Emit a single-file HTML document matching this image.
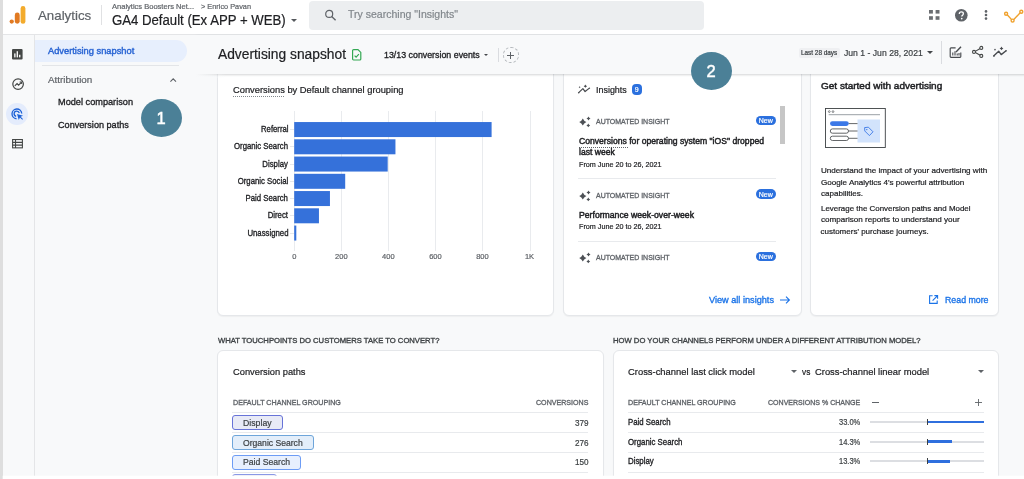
<!DOCTYPE html>
<html><head><meta charset="utf-8"><title>Advertising snapshot</title>
<style>
*{box-sizing:border-box;margin:0;padding:0}
html,body{width:1024px;height:479px;overflow:hidden;background:#f8f9fa;font-family:"Liberation Sans",sans-serif;color:#202124}
.a{position:absolute}
.card{position:absolute;background:#fff;border:1px solid #e5e7ea;border-radius:6px;box-shadow:0 1px 1px rgba(60,64,67,.05)}
.t{position:absolute;white-space:pre;line-height:1;-webkit-text-stroke:0.2px currentColor}
.hl{position:absolute;height:1px;background:#e8eaed}
.bar{position:absolute;left:294px;height:15.2px;background:#3470db}
.gl{position:absolute;top:111px;width:1px;height:140px;background:#e9ebee}
.tk{position:absolute;left:290px;width:4px;height:1px;background:#e6e8eb}
.chip{position:absolute;left:232.2px;height:14.6px;border:1px solid #6d9cf5;border-radius:3px;background:#e8f0fe}
.pill{position:absolute;left:755.7px;width:20px;height:9.8px;border-radius:5px;background:#2b70de}
svg{position:absolute;overflow:visible}
</style></head><body>
<div class="a" style="left:0;top:0;width:1024px;height:35px;background:#fff;border-bottom:1px solid #e4e5e7"></div>
<div class="a" style="left:0;top:35px;width:35px;height:444px;border-right:1px solid #e4e5e7"></div>
<div class="a" style="left:0;top:0;width:2.6px;height:479px;background:#dedede"></div>

<!-- logo -->
<svg style="left:0;top:0" width="40" height="34" viewBox="0 0 40 34">
<circle cx="11.7" cy="21.6" r="2.15" fill="#e17a22"/>
<rect x="14.8" y="12.5" width="4.9" height="11.3" rx="2.45" fill="#e17a22"/>
<rect x="20.6" y="6" width="4.8" height="17.8" rx="2.4" fill="#f3ab2c"/>
</svg>
<div class="a" style="left:101px;top:5px;width:1px;height:19.5px;background:#e0e1e3"></div>
<div class="a" style="left:290.7px;top:18.8px;border:3px solid transparent;border-top:3.3px solid #55585c;border-bottom:0"></div>
<div class="a" style="left:308.5px;top:0.5px;width:395.3px;height:29px;background:#eceef0;border-radius:4px"></div>
<svg style="left:324px;top:9px" width="14" height="14" viewBox="0 0 14 14"><circle cx="5.2" cy="4.9" r="3.5" fill="none" stroke="#5f6368" stroke-width="1.2"/><path d="M7.7 7.5 L11.6 11.2" stroke="#5f6368" stroke-width="1.4"/></svg>
<!-- header right icons -->
<svg style="left:929.1px;top:10px" width="10.6" height="9.8" viewBox="0 0 10.6 9.8" fill="#6b6e72"><rect x="0" y="0" width="3.9" height="3.6"/><rect x="6.6" y="0" width="3.9" height="3.6"/><rect x="0" y="6.2" width="3.9" height="3.6"/><rect x="6.6" y="6.2" width="3.9" height="3.6"/></svg>
<svg style="left:955px;top:8.7px" width="12.6" height="12.6" viewBox="0 0 24 24"><circle cx="12" cy="12" r="12" fill="#5f6368"/><path d="M8.2 9.4c0-2.2 1.7-3.8 3.9-3.8s3.8 1.4 3.8 3.4c0 2.6-3 2.9-3 5.2" fill="none" stroke="#fff" stroke-width="2.4"/><circle cx="12.8" cy="18.2" r="1.6" fill="#fff"/></svg>
<svg style="left:984.2px;top:10px" width="4" height="10" viewBox="0 0 4 10" fill="#5f6368"><circle cx="2" cy="1.4" r="1.3"/><circle cx="2" cy="5" r="1.3"/><circle cx="2" cy="8.6" r="1.3"/></svg>
<svg style="left:1000px;top:8px" width="24" height="16" viewBox="0 0 24 16" fill="none" stroke="#f0a22e" stroke-width="1.4"><path d="M7.2 6.8 L11.6 11.6 M13.8 11.4 L20.2 4.8"/><circle cx="6.1" cy="5.7" r="1.5"/><circle cx="12.6" cy="12.6" r="1.5"/><circle cx="21.3" cy="3.7" r="1.5"/></svg>

<!-- rail icons -->
<svg style="left:12px;top:49px" width="10.6" height="10.6" viewBox="0 0 24 24"><rect width="24" height="24" rx="2.5" fill="#444746"/><rect x="5" y="10" width="3" height="9" fill="#fff"/><rect x="10.5" y="5" width="3" height="14" fill="#fff"/><rect x="16" y="13" width="3" height="6" fill="#fff"/></svg>
<svg style="left:11.7px;top:78px" width="12.2" height="12.2" viewBox="0 0 24 24" fill="none" stroke="#444746" stroke-width="2.4"><circle cx="12" cy="12" r="10.4"/><path d="M5.5 15.5 L10 11 L13 14 L18.5 8.5"/><path d="M15 8 h4 v4" stroke-width="2"/></svg>
<div class="a" style="left:6.3px;top:102.6px;width:22px;height:22.4px;border-radius:50%;background:#e4ecfc"></div>
<svg style="left:11.2px;top:108px" width="12.6" height="12.6" viewBox="0 0 24 24" fill="none" stroke="#1a60d6" stroke-width="2.5"><path d="M20.5 10.5 A9.3 9.3 0 1 0 10.5 20.5"/><path d="M15.8 9.8 A5 5 0 1 0 9.8 15.8"/><path d="M11.5 11.5 L14.8 23 L17 18.2 L21.5 22.5 L22.8 21.2 L18.4 16.8 L23 14.8 Z" fill="#1a60d6" stroke="none"/></svg>
<svg style="left:12px;top:138.8px" width="11" height="9.4" viewBox="0 0 22 19" fill="none" stroke="#444746" stroke-width="2.2"><rect x="1.1" y="1.1" width="19.8" height="16.8"/><path d="M1 6.8 H21 M1 12.4 H21 M7 1 V18"/></svg>

<!-- nav -->
<div class="a" style="left:35px;top:40px;width:151.8px;height:21.7px;background:#e7effd;border-radius:0 11px 11px 0"></div>
<div class="hl" style="left:42px;top:65px;width:137px;background:#e3e5e8"></div>
<svg style="left:170.3px;top:77.6px" width="6.4" height="4" viewBox="0 0 6.4 4" fill="none" stroke="#5f6368" stroke-width="1.1"><path d="M0.4 3.6 L3.2 0.8 L6 3.6"/></svg>

<!-- cards -->
<div class="card" style="left:217.3px;top:60px;width:337px;height:256px"></div>
<div class="card" style="left:563px;top:60px;width:239px;height:256px"></div>
<div class="card" style="left:810px;top:60px;width:189px;height:256px"></div>
<div class="card" style="left:217.3px;top:350px;width:386.7px;height:150px"></div>
<div class="card" style="left:612.8px;top:350px;width:386.4px;height:150px"></div>
<!-- topbar -->
<div class="a" style="left:196px;top:35px;width:840px;height:38.6px;background:#f8f9fa;box-shadow:0 1px 2px rgba(60,64,67,.22)"></div>
<div class="a" style="left:35px;top:35px;width:180px;height:4px;background:#f8f9fa"></div>
<div class="a" style="left:186.5px;top:35px;width:12px;height:38.6px;background:#f8f9fa"></div>
<div class="a" style="left:186px;top:73.6px;width:40px;height:4px;background:linear-gradient(to right,#f8f9fa 25%,rgba(248,249,250,0))"></div>

<!-- topbar items -->
<svg style="left:352.2px;top:49.2px" width="9.4" height="11.6" viewBox="0 0 9.4 11.6" fill="none" stroke="#34a853" stroke-width="1.2"><path d="M0.6 1.6 a1 1 0 0 1 1 -1 H6 L8.8 3.4 V10 a1 1 0 0 1 -1 1 H1.6 a1 1 0 0 1 -1 -1 Z"/><path d="M2.6 6.6 L4.1 8.1 L6.9 5.2"/></svg>
<div class="a" style="left:484.1px;top:53.8px;border:2.7px solid transparent;border-top:2.8px solid #44474a;border-bottom:0"></div>
<div class="a" style="left:498px;top:48px;width:1px;height:14px;background:#dadce0"></div>
<div class="a" style="left:503.2px;top:47.4px;width:15.4px;height:15.4px;border:1px dashed #b4b8bc;border-radius:50%"></div>
<svg style="left:507.4px;top:51.6px" width="7" height="7" viewBox="0 0 7 7" stroke="#5f6368" stroke-width="1"><path d="M0 3.5 H7 M3.5 0 V7"/></svg>
<div class="a" style="left:798.5px;top:48px;width:41.5px;height:9.6px;background:#eff0f2;border-radius:2px"></div>
<div class="a" style="left:927.4px;top:50.5px;border:3.2px solid transparent;border-top:3.1px solid #44474a;border-bottom:0"></div>
<div class="a" style="left:941px;top:40.6px;width:1px;height:23px;background:#dadce0"></div>
<svg style="left:948.5px;top:45.5px" width="13" height="12.6" viewBox="0 0 13 12.6" fill="none" stroke="#474a4e" stroke-width="1.15"><path d="M6.6 1.9 H2 a0.8 0.8 0 0 0 -0.8 0.8 V10.6 a0.8 0.8 0 0 0 0.8 0.8 H11 a0.8 0.8 0 0 0 0.8 -0.8 V6.4"/><path d="M3.8 9.6 V6.6 M6 9.6 V5.2 M8.2 9.6 V7.6 M10 9.6 V7" stroke-width="1.1"/><path d="M7 6 L12 0.8" stroke-width="1.4"/></svg>
<svg style="left:971.7px;top:46.2px" width="11.4" height="11.8" viewBox="0 0 11.4 11.8" fill="none" stroke="#444746" stroke-width="1.1"><path d="M8.6 2.2 L2.4 5.9 L8.6 9.6"/><circle cx="9.3" cy="1.9" r="1.5" fill="#f8f9fa"/><circle cx="2" cy="5.9" r="1.5" fill="#f8f9fa"/><circle cx="9.3" cy="9.9" r="1.5" fill="#f8f9fa"/></svg>
<svg style="left:992px;top:46px" width="16.0" height="12.0" viewBox="0 0 16 12" fill="none" stroke="#474a4e" stroke-width="1.35" stroke-linejoin="round"><path d="M1.9 9.8 L6.7 5.2 L9.2 8.6 L14.1 4.7"/><circle cx="1.9" cy="9.9" r="0.9" fill="#474a4e" stroke="none"/><circle cx="14.1" cy="4.7" r="0.8" fill="#474a4e" stroke="none"/><path d="M9.5 0.5 Q9.97 1.92 11.4 2.4 Q9.97 2.88 9.5 4.3 Q9.03 2.88 7.6 2.4 Q9.03 1.92 9.5 0.5Z" fill="#474a4e" stroke="none"/><path d="M3 2.6 Q3.27 3.43 4.1 3.7 Q3.27 3.98 3 4.800000000000001 Q2.73 3.98 1.9 3.7 Q2.73 3.43 3 2.6Z" fill="#474a4e" stroke="none"/></svg>

<!-- card1 chart -->
<div class="a" style="left:232.5px;top:95.5px;width:51px;height:0;border-top:1px dotted #80868b"></div>
<div class="gl" style="left:294px"></div><div class="gl" style="left:341px"></div><div class="gl" style="left:388px"></div><div class="gl" style="left:435px"></div><div class="gl" style="left:482px"></div><div class="gl" style="left:529.5px"></div>
<svg style="left:0;top:0" width="1024" height="479" viewBox="0 0 1024 479" fill="#3571da"><rect x="294.2" y="122.05" width="197.4" height="15"/><rect x="294.2" y="139.30" width="101.25" height="15"/><rect x="294.2" y="156.55" width="93.5" height="15"/><rect x="294.2" y="173.80" width="51" height="15"/><rect x="294.2" y="191.05" width="35.75" height="15"/><rect x="294.2" y="208.30" width="24.75" height="15"/><rect x="294.2" y="225.55" width="2.1" height="15"/></svg>
<div class="tk" style="top:129px"></div><div class="tk" style="top:146.3px"></div><div class="tk" style="top:163.5px"></div><div class="tk" style="top:180.8px"></div><div class="tk" style="top:198px"></div><div class="tk" style="top:215.3px"></div><div class="tk" style="top:232.5px"></div>

<!-- card2 insights -->
<svg style="left:577.3px;top:84.3px" width="14.1" height="10.6" viewBox="0 0 16 12" fill="none" stroke="#474a4e" stroke-width="1.35" stroke-linejoin="round"><path d="M1.9 9.8 L6.7 5.2 L9.2 8.6 L14.1 4.7"/><circle cx="1.9" cy="9.9" r="0.9" fill="#474a4e" stroke="none"/><circle cx="14.1" cy="4.7" r="0.8" fill="#474a4e" stroke="none"/><path d="M9.5 0.5 Q9.97 1.92 11.4 2.4 Q9.97 2.88 9.5 4.3 Q9.03 2.88 7.6 2.4 Q9.03 1.92 9.5 0.5Z" fill="#474a4e" stroke="none"/><path d="M3 2.6 Q3.27 3.43 4.1 3.7 Q3.27 3.98 3 4.800000000000001 Q2.73 3.98 1.9 3.7 Q2.73 3.43 3 2.6Z" fill="#474a4e" stroke="none"/></svg>
<div class="a" style="left:632px;top:84.3px;width:9.5px;height:10.9px;background:#2b70de;border-radius:4px"></div>
<div class="a" style="left:779.6px;top:106.2px;width:5.8px;height:38px;background:#c6c6c6"></div>
<svg style="left:579px;top:116px" width="12" height="12" viewBox="0 0 12 12" fill="#4d5156"><path d="M3.8 2.4 Q4.88 4.92 7.4 6 Q4.88 7.08 3.8 9.6 Q2.72 7.08 0.19999999999999973 6 Q2.72 4.92 3.8 2.4Z"/><path d="M9.5 0.3999999999999999 Q10.10 1.80 11.5 2.4 Q10.10 3.00 9.5 4.4 Q8.90 3.00 7.5 2.4 Q8.90 1.80 9.5 0.3999999999999999Z"/><path d="M9.3 7.5 Q9.87 8.83 11.200000000000001 9.4 Q9.87 9.97 9.3 11.3 Q8.73 9.97 7.4 9.4 Q8.73 8.83 9.3 7.5Z"/></svg>
<svg style="left:579px;top:189.5px" width="12" height="12" viewBox="0 0 12 12" fill="#4d5156"><path d="M3.8 2.4 Q4.88 4.92 7.4 6 Q4.88 7.08 3.8 9.6 Q2.72 7.08 0.19999999999999973 6 Q2.72 4.92 3.8 2.4Z"/><path d="M9.5 0.3999999999999999 Q10.10 1.80 11.5 2.4 Q10.10 3.00 9.5 4.4 Q8.90 3.00 7.5 2.4 Q8.90 1.80 9.5 0.3999999999999999Z"/><path d="M9.3 7.5 Q9.87 8.83 11.200000000000001 9.4 Q9.87 9.97 9.3 11.3 Q8.73 9.97 7.4 9.4 Q8.73 8.83 9.3 7.5Z"/></svg>
<svg style="left:579px;top:252px" width="12" height="12" viewBox="0 0 12 12" fill="#4d5156"><path d="M3.8 2.4 Q4.88 4.92 7.4 6 Q4.88 7.08 3.8 9.6 Q2.72 7.08 0.19999999999999973 6 Q2.72 4.92 3.8 2.4Z"/><path d="M9.5 0.3999999999999999 Q10.10 1.80 11.5 2.4 Q10.10 3.00 9.5 4.4 Q8.90 3.00 7.5 2.4 Q8.90 1.80 9.5 0.3999999999999999Z"/><path d="M9.3 7.5 Q9.87 8.83 11.200000000000001 9.4 Q9.87 9.97 9.3 11.3 Q8.73 9.97 7.4 9.4 Q8.73 8.83 9.3 7.5Z"/></svg>
<div class="pill" style="top:115.7px"></div><div class="pill" style="top:189.2px"></div><div class="pill" style="top:251.7px"></div>
<div class="a" style="left:578.7px;top:147.2px;width:49.3px;height:0;border-top:1px dotted #5f6368"></div>
<div class="hl" style="left:578px;top:178.3px;width:197.5px"></div>
<div class="hl" style="left:578px;top:240.8px;width:197.5px"></div>
<svg style="left:779.5px;top:295.5px" width="10" height="8" viewBox="0 0 10 8" fill="none" stroke="#1a73e8" stroke-width="1.1"><path d="M0 4 H9.4 M6 0.6 L9.4 4 L6 7.4"/></svg>

<!-- card3 -->
<svg style="left:825px;top:108px" width="61" height="40" viewBox="0 0 61 40" fill="none">
<rect x="0.5" y="0.5" width="59.8" height="39" stroke="#3c4043" stroke-width="0.9"/>
<circle cx="4.3" cy="3.6" r="0.9" stroke="#3c4043" stroke-width="0.6"/><circle cx="8" cy="3.6" r="0.9" stroke="#3c4043" stroke-width="0.6"/>
<path d="M3.7 6.7 H55" stroke="#9aa0a6" stroke-width="1"/>
<rect x="32.5" y="11.5" width="22.5" height="23" fill="#d2e3fc"/>
<rect x="5" y="13.2" width="18.8" height="4.8" rx="2.4" fill="#3b78e7"/>
<rect x="5.3" y="20.9" width="18.2" height="4.3" rx="2.15" stroke="#3c4043" stroke-width="0.8"/>
<rect x="5.3" y="28.2" width="18.2" height="4.3" rx="2.15" stroke="#3c4043" stroke-width="0.8"/>
<path d="M23.8 15.6 H32.5 M23.5 23 H32.5 M23.5 30.3 H32.5" stroke="#3c4043" stroke-width="0.8"/>
<path d="M39.6 19.6 L43.4 19.2 L48 23.8 L44.4 27.6 L39.8 23 Z" stroke="#3b78e7" stroke-width="0.9" stroke-linejoin="round"/><circle cx="41.8" cy="21.6" r="0.7" fill="#3b78e7"/>
</svg>
<svg style="left:929.2px;top:295.4px" width="9.2" height="9" viewBox="0 0 9.2 9" fill="none" stroke="#1a73e8" stroke-width="1.1"><path d="M3.6 0.8 H0.6 V8.4 H8.2 V5.4"/><path d="M5.4 0.6 H8.6 V3.8 M8.4 0.8 L3.6 5.6"/></svg>

<!-- card4 -->
<div class="hl" style="left:232.2px;top:412.2px;width:356px"></div>
<div class="hl" style="left:232.2px;top:431.9px;width:356px"></div>
<div class="hl" style="left:232.2px;top:451.8px;width:356px"></div>
<div class="hl" style="left:232.2px;top:471.7px;width:356px"></div>
<div class="chip" style="top:415.2px;width:50.5px;border-color:#6773d8;background:#e8eaf6"></div>
<div class="chip" style="top:435.1px;width:81.6px;border-color:#6ea5da;background:#e3eefa"></div>
<div class="chip" style="top:454.7px;width:68.5px;height:15px"></div>
<div class="chip" style="top:474.3px;width:44.6px;border-color:#8a98e6;background:#e8eaf6"></div>

<!-- card5 -->
<div class="a" style="left:791.2px;top:370.2px;border:3px solid transparent;border-top:3px solid #5f6368;border-bottom:0"></div>
<div class="a" style="left:977.9px;top:370.2px;border:3.1px solid transparent;border-top:3px solid #5f6368;border-bottom:0"></div>
<div class="a" style="left:871.6px;top:401.5px;width:7px;height:1px;background:#5f6368"></div>
<svg style="left:975.2px;top:398.5px" width="7" height="7" viewBox="0 0 7 7" stroke="#5f6368" stroke-width="0.9"><path d="M0 3.5 H7 M3.5 0 V7"/></svg>
<div class="hl" style="left:628.2px;top:411.8px;width:355.6px"></div>
<div class="hl" style="left:628.2px;top:431.7px;width:355.6px"></div>
<div class="hl" style="left:628.2px;top:451.6px;width:355.6px"></div>
<div class="hl" style="left:628.2px;top:471.5px;width:355.6px"></div>
<div class="a" style="left:870.3px;top:420.8px;width:113.7px;height:2.3px;background:#dcdee2"></div>
<div class="a" style="left:870.3px;top:440.5px;width:113.7px;height:2.3px;background:#dcdee2"></div>
<div class="a" style="left:870.3px;top:460.2px;width:113.7px;height:2.3px;background:#dcdee2"></div>
<div class="a" style="left:927.4px;top:420.6px;width:56.4px;height:2.7px;background:#2f6fde"></div>
<div class="a" style="left:927.4px;top:440.3px;width:24.5px;height:2.7px;background:#2f6fde"></div>
<div class="a" style="left:927.4px;top:460px;width:22.6px;height:2.7px;background:#2f6fde"></div>
<div class="a" style="left:927px;top:419px;width:1px;height:6.2px;background:#3c4043"></div>
<div class="a" style="left:927px;top:438.6px;width:1px;height:6.2px;background:#3c4043"></div>
<div class="a" style="left:927px;top:458.2px;width:1px;height:6.2px;background:#3c4043"></div>

<svg style="left:0;top:470px" width="1024" height="9" viewBox="0 0 1024 9"><rect x="2.7" y="5.7" width="1022" height="4" fill="#fff"/></svg>
<!-- annotation circles -->
<div class="a" style="left:140.6px;top:99px;width:41px;height:38px;border-radius:50%;background:#4b8097"></div>
<div class="a" style="left:690.5px;top:51.5px;width:41.2px;height:38px;border-radius:50%;background:#4b8097"></div>

<div class="a" style="left:0;top:0;width:1024px;height:479px;will-change:transform">
<div class="t" style="top:8.90px;font-size:13.5px;color:#5f6368;left:38.00px;transform:scaleX(0.9846);transform-origin:0 0;">Analytics</div>
<div class="t" style="top:3.00px;font-size:7.5px;color:#5f6368;left:111.80px;transform:scaleX(1.0036);transform-origin:0 0;">Analytics Boosters Net...</div>
<div class="t" style="top:3.00px;font-size:7.5px;color:#5f6368;left:201.30px;transform:scaleX(0.9789);transform-origin:0 0;">&gt; Enrico Pavan</div>
<div class="t" style="top:12.50px;font-size:14px;color:#202124;left:111.80px;transform:scaleX(0.9412);transform-origin:0 0;">GA4 Default (Ex APP + WEB)</div>
<div class="t" style="top:9.25px;font-size:10.5px;color:#80868b;left:348.00px;transform:scaleX(1.0020);transform-origin:0 0;">Try searching "Insights"</div>
<div class="t" style="top:46.25px;font-size:9.5px;color:#2b66d4;left:47.50px;transform:scaleX(0.9779);transform-origin:0 0;-webkit-text-stroke:0.45px currentColor;">Advertising snapshot</div>
<div class="t" style="top:75.00px;font-size:9.5px;color:#5f6368;left:47.50px;transform:scaleX(1.0343);transform-origin:0 0;">Attribution</div>
<div class="t" style="top:97.00px;font-size:9.5px;color:#202124;left:57.50px;transform:scaleX(0.9662);transform-origin:0 0;-webkit-text-stroke:0.32px currentColor;">Model comparison</div>
<div class="t" style="top:119.60px;font-size:9.5px;color:#202124;left:57.50px;transform:scaleX(0.9576);transform-origin:0 0;-webkit-text-stroke:0.32px currentColor;">Conversion paths</div>
<div class="t" style="top:46.75px;font-size:14px;color:#202124;left:218.00px;transform:scaleX(0.9849);transform-origin:0 0;">Advertising snapshot</div>
<div class="t" style="top:51.25px;font-size:9px;color:#202124;left:384.00px;transform:scaleX(0.9813);transform-origin:0 0;-webkit-text-stroke:0.32px currentColor;">13/13 conversion events</div>
<div class="t" style="top:49.75px;font-size:6.3px;color:#3c4043;left:801.00px;transform:scaleX(1.0149);transform-origin:0 0;">Last 28 days</div>
<div class="t" style="top:48.50px;font-size:9px;color:#3c4043;left:844.25px;transform:scaleX(0.9596);transform-origin:0 0;">Jun 1 - Jun 28, 2021</div>
<div class="t" style="top:85.50px;font-size:9px;color:#202124;left:232.50px;transform:scaleX(1.0358);transform-origin:0 0;">Conversions by Default channel grouping</div>
<div class="t" style="top:125.10px;font-size:8.8px;color:#202124;left:260.75px;transform:scaleX(0.8787);transform-origin:0 0;-webkit-text-stroke:0.32px currentColor;">Referral</div>
<div class="t" style="top:142.37px;font-size:8.8px;color:#202124;left:234.25px;transform:scaleX(0.8834);transform-origin:0 0;-webkit-text-stroke:0.32px currentColor;">Organic Search</div>
<div class="t" style="top:159.64px;font-size:8.8px;color:#202124;right:735.75px;transform:scaleX(0.8834);transform-origin:100% 0;-webkit-text-stroke:0.32px currentColor;">Display</div>
<div class="t" style="top:176.91px;font-size:8.8px;color:#202124;right:735.75px;transform:scaleX(0.8834);transform-origin:100% 0;-webkit-text-stroke:0.32px currentColor;">Organic Social</div>
<div class="t" style="top:194.18px;font-size:8.8px;color:#202124;right:735.75px;transform:scaleX(0.8834);transform-origin:100% 0;-webkit-text-stroke:0.32px currentColor;">Paid Search</div>
<div class="t" style="top:211.45px;font-size:8.8px;color:#202124;right:735.75px;transform:scaleX(0.8834);transform-origin:100% 0;-webkit-text-stroke:0.32px currentColor;">Direct</div>
<div class="t" style="top:228.72px;font-size:8.8px;color:#202124;right:735.75px;transform:scaleX(0.8834);transform-origin:100% 0;-webkit-text-stroke:0.32px currentColor;">Unassigned</div>
<div class="t" style="top:253.25px;font-size:7.5px;color:#5f6368;left:294.25px;transform:translateX(-50%) scaleX(1.0000);">0</div>
<div class="t" style="top:253.25px;font-size:7.5px;color:#5f6368;left:341.30px;transform:translateX(-50%) scaleX(1.0000);">200</div>
<div class="t" style="top:253.25px;font-size:7.5px;color:#5f6368;left:388.35px;transform:translateX(-50%) scaleX(1.0000);">400</div>
<div class="t" style="top:253.25px;font-size:7.5px;color:#5f6368;left:435.40px;transform:translateX(-50%) scaleX(1.0000);">600</div>
<div class="t" style="top:253.25px;font-size:7.5px;color:#5f6368;left:482.45px;transform:translateX(-50%) scaleX(1.0000);">800</div>
<div class="t" style="top:253.25px;font-size:7.5px;color:#5f6368;left:529.50px;transform:translateX(-50%) scaleX(1.0000);">1K</div>
<div class="t" style="top:86.00px;font-size:9px;color:#202124;left:595.75px;transform:scaleX(0.9909);transform-origin:0 0;">Insights</div>
<div class="t" style="top:86.20px;font-size:7px;color:#fff;left:636.75px;transform:translateX(-50%) scaleX(1.0000);">9</div>
<div class="t" style="top:118.25px;font-size:7.6px;color:#5f6368;left:595.75px;transform:scaleX(0.9200);transform-origin:0 0;-webkit-text-stroke:0.32px currentColor;">AUTOMATED INSIGHT</div>
<div class="t" style="top:117.05px;font-size:7px;color:#fff;left:765.75px;transform:translateX(-50%) scaleX(1.0000);">New</div>
<div class="t" style="top:191.75px;font-size:7.6px;color:#5f6368;left:595.75px;transform:scaleX(0.9200);transform-origin:0 0;-webkit-text-stroke:0.32px currentColor;">AUTOMATED INSIGHT</div>
<div class="t" style="top:190.55px;font-size:7px;color:#fff;left:765.75px;transform:translateX(-50%) scaleX(1.0000);">New</div>
<div class="t" style="top:254.00px;font-size:7.6px;color:#5f6368;left:595.75px;transform:scaleX(0.9200);transform-origin:0 0;-webkit-text-stroke:0.32px currentColor;">AUTOMATED INSIGHT</div>
<div class="t" style="top:252.80px;font-size:7px;color:#fff;left:765.75px;transform:translateX(-50%) scaleX(1.0000);">New</div>
<div class="t" style="top:137.25px;font-size:8.8px;color:#202124;left:578.75px;transform:scaleX(0.9782);transform-origin:0 0;-webkit-text-stroke:0.45px currentColor;">Conversions for operating system "iOS" dropped</div>
<div class="t" style="top:148.00px;font-size:8.8px;color:#202124;left:578.75px;transform:scaleX(0.9749);transform-origin:0 0;-webkit-text-stroke:0.45px currentColor;">last week</div>
<div class="t" style="top:160.75px;font-size:7.7px;color:#202124;left:578.75px;transform:scaleX(0.9370);transform-origin:0 0;">From June 20 to 26, 2021</div>
<div class="t" style="top:210.50px;font-size:8.8px;color:#202124;left:578.75px;transform:scaleX(0.9841);transform-origin:0 0;-webkit-text-stroke:0.45px currentColor;">Performance week-over-week</div>
<div class="t" style="top:222.75px;font-size:7.7px;color:#202124;left:578.75px;transform:scaleX(0.9370);transform-origin:0 0;">From June 20 to 26, 2021</div>
<div class="t" style="top:295.50px;font-size:9px;color:#1a73e8;left:708.75px;transform:scaleX(1.0176);transform-origin:0 0;-webkit-text-stroke:0.32px currentColor;">View all insights</div>
<div class="t" style="top:80.75px;font-size:9.5px;color:#202124;left:821.00px;transform:scaleX(1.0533);transform-origin:0 0;-webkit-text-stroke:0.45px currentColor;">Get started with advertising</div>
<div class="t" style="top:167.00px;font-size:8px;color:#202124;left:820.50px;transform:scaleX(1.0104);transform-origin:0 0;">Understand the impact of your advertising with</div>
<div class="t" style="top:179.00px;font-size:8px;color:#202124;left:820.50px;transform:scaleX(1.0116);transform-origin:0 0;">Google Analytics 4's powerful attribution</div>
<div class="t" style="top:190.25px;font-size:8px;color:#202124;left:820.50px;transform:scaleX(1.0045);transform-origin:0 0;">capabilities.</div>
<div class="t" style="top:204.60px;font-size:8px;color:#202124;left:820.50px;transform:scaleX(0.9916);transform-origin:0 0;">Leverage the Conversion paths and Model</div>
<div class="t" style="top:216.00px;font-size:8px;color:#202124;left:820.50px;transform:scaleX(1.0098);transform-origin:0 0;">comparison reports to understand your</div>
<div class="t" style="top:227.75px;font-size:8px;color:#202124;left:820.50px;transform:scaleX(1.0000);transform-origin:0 0;">customers' purchase journeys.</div>
<div class="t" style="top:295.50px;font-size:9px;color:#1a73e8;left:944.50px;transform:scaleX(0.9768);transform-origin:0 0;-webkit-text-stroke:0.32px currentColor;">Read more</div>
<div class="t" style="top:337.00px;font-size:7.5px;color:#3c4043;left:217.60px;transform:scaleX(1.0203);transform-origin:0 0;-webkit-text-stroke:0.32px currentColor;">WHAT TOUCHPOINTS DO CUSTOMERS TAKE TO CONVERT?</div>
<div class="t" style="top:337.00px;font-size:7.5px;color:#3c4043;left:613.20px;transform:scaleX(1.0220);transform-origin:0 0;-webkit-text-stroke:0.32px currentColor;">HOW DO YOUR CHANNELS PERFORM UNDER A DIFFERENT ATTRIBUTION MODEL?</div>
<div class="t" style="top:366.80px;font-size:9.7px;color:#202124;left:232.50px;transform:scaleX(0.9617);transform-origin:0 0;">Conversion paths</div>
<div class="t" style="top:399.00px;font-size:7.5px;color:#5f6368;left:232.50px;transform:scaleX(0.9495);transform-origin:0 0;-webkit-text-stroke:0.32px currentColor;">DEFAULT CHANNEL GROUPING</div>
<div class="t" style="top:399.00px;font-size:7.5px;color:#5f6368;left:535.90px;transform:scaleX(0.9452);transform-origin:0 0;-webkit-text-stroke:0.32px currentColor;">CONVERSIONS</div>
<div class="t" style="top:418.70px;font-size:9px;color:#3c4043;left:243.00px;transform:scaleX(0.9690);transform-origin:0 0;">Display</div>
<div class="t" style="top:438.50px;font-size:9px;color:#3c4043;left:243.00px;transform:scaleX(0.9547);transform-origin:0 0;">Organic Search</div>
<div class="t" style="top:458.20px;font-size:9px;color:#3c4043;left:243.00px;transform:scaleX(0.9586);transform-origin:0 0;">Paid Search</div>
<div class="t" style="top:418.60px;font-size:9px;color:#3c4043;left:574.70px;transform:scaleX(0.9048);transform-origin:0 0;">379</div>
<div class="t" style="top:438.50px;font-size:9px;color:#3c4043;left:574.70px;transform:scaleX(0.9048);transform-origin:0 0;">276</div>
<div class="t" style="top:458.20px;font-size:9px;color:#3c4043;left:574.70px;transform:scaleX(0.9048);transform-origin:0 0;">150</div>
<div class="t" style="top:366.80px;font-size:9.7px;color:#202124;left:628.20px;transform:scaleX(0.9691);transform-origin:0 0;">Cross-channel last click model</div>
<div class="t" style="top:366.80px;font-size:9.7px;color:#202124;left:801.90px;transform:scaleX(0.8568);transform-origin:0 0;">vs</div>
<div class="t" style="top:366.80px;font-size:9.7px;color:#202124;left:814.80px;transform:scaleX(0.9684);transform-origin:0 0;">Cross-channel linear model</div>
<div class="t" style="top:398.70px;font-size:7.5px;color:#5f6368;left:628.20px;transform:scaleX(0.9486);transform-origin:0 0;-webkit-text-stroke:0.32px currentColor;">DEFAULT CHANNEL GROUPING</div>
<div class="t" style="top:398.70px;font-size:7.5px;color:#5f6368;left:767.70px;transform:scaleX(0.9384);transform-origin:0 0;-webkit-text-stroke:0.32px currentColor;">CONVERSIONS % CHANGE</div>
<div class="t" style="top:417.60px;font-size:8.8px;color:#202124;left:628.20px;transform:scaleX(0.8866);transform-origin:0 0;-webkit-text-stroke:0.32px currentColor;">Paid Search</div>
<div class="t" style="top:437.50px;font-size:8.8px;color:#202124;left:628.20px;transform:scaleX(0.8900);transform-origin:0 0;-webkit-text-stroke:0.32px currentColor;">Organic Search</div>
<div class="t" style="top:457.00px;font-size:8.8px;color:#202124;left:628.20px;transform:scaleX(0.8945);transform-origin:0 0;-webkit-text-stroke:0.32px currentColor;">Display</div>
<div class="t" style="top:417.60px;font-size:9px;color:#3c4043;left:838.70px;transform:scaleX(0.8343);transform-origin:0 0;">33.0%</div>
<div class="t" style="top:437.50px;font-size:9px;color:#3c4043;left:838.70px;transform:scaleX(0.8343);transform-origin:0 0;">14.3%</div>
<div class="t" style="top:457.00px;font-size:9px;color:#3c4043;left:838.70px;transform:scaleX(0.8343);transform-origin:0 0;">13.3%</div>
<div class="t" style="top:110.30px;font-size:16.5px;color:#fff;left:161.10px;transform:translateX(-50%) scaleX(1.0000);-webkit-text-stroke:0.45px currentColor;">1</div>
<div class="t" style="top:62.90px;font-size:16.5px;color:#fff;left:711.00px;transform:translateX(-50%) scaleX(1.0000);-webkit-text-stroke:0.45px currentColor;">2</div>
</div>
</body></html>
